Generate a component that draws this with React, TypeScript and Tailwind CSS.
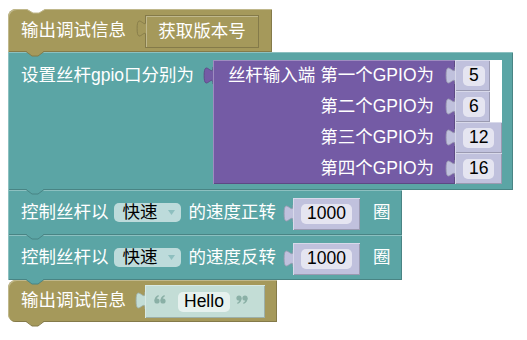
import React from 'react';

const OLIVE = { fill: '#a5995b', light: '#c0b88c', dark: '#847a49' };
const TEAL = { fill: '#5ba5a5', light: '#8cc0c0', dark: '#498484' };
const PURPLE = { fill: '#745ba5', light: '#9e8cc0', dark: '#5d4984' };
const LAV = { fill: '#c0c1dd', light: '#d8d9ea', dark: '#9a9ab1' };
const MINT = { fill: '#c3ddd6', light: '#d8e9e4', dark: '#9cb0aa' };

type Pal = { fill: string; light: string; dark: string };

// puzzle tab on the left side of a value block
function LeftTab({ pal, className }: { pal: Pal; className: string }) {
  return (
    <svg
      className={`absolute right-full z-10 ${className}`}
      width="10"
      height="17"
      viewBox="0 0 9 15"
      preserveAspectRatio="none"
    >
      <path d="M9.5 0 C9 10 1 -8 1 7.5 C1 23 9 5 9.5 15 Z" fill={pal.fill} />
      <path d="M9 0 C9 10 1 -8 1 7.5 C1 23 9 5 9 15" fill="none" stroke={pal.dark} strokeWidth="0.8" />
    </svg>
  );
}

// next-statement tab hanging under a block
function NextTab({ pal }: { pal: Pal }) {
  return (
    <svg className="absolute top-full left-[18px] -mt-px z-10" width="18" height="6" viewBox="0 0 18 6">
      <path d="M0 0 L6 5 L12 5 L18 0 Z" fill={pal.fill} />
      <path d="M0 0.5 L6 5 L12 5 L18 0.5" fill="none" stroke={pal.dark} />
    </svg>
  );
}

function TopNotch() {
  return (
    <svg className="absolute top-0 left-[19px]" width="18" height="5" viewBox="0 0 18 5">
      <path d="M0 0 L6 4 L12 4 L18 0 Z" fill="#ffffff" />
      <path d="M0 0.5 L6 4 L12 4 L18 0.5" fill="none" stroke={OLIVE.light} />
    </svg>
  );
}

// blockly style quote marks ("66" / "99")
function Quote({ close = false }: { close?: boolean }) {
  const mark = (
    <>
      <circle cx="3" cy="6" r="2.6" />
      <path d="M0.4 6 C0.4 3 1.8 1 4.4 0 L4.9 1.2 C3.3 2 2.7 3 2.7 4.6 Z" />
    </>
  );
  return (
    <svg width="12" height="9" viewBox="0 0 12 9" fill="#8ab0a6" className={close ? 'rotate-180' : ''}>
      <g>{mark}</g>
      <g transform="translate(6 0)">{mark}</g>
    </svg>
  );
}

function NumberBlock({ value, width, height, pal = LAV }: { value: string; width: string; height: string; pal?: Pal }) {
  return (
    <div
      className={`relative flex items-center pl-[8px] ${width} ${height} bg-[#c0c1dd] shadow-[inset_1px_1px_0_#d8d9ea,inset_-1px_-1px_0_#9a9ab1]`}
    >
      <LeftTab pal={pal} className="top-[7px]" />
      <span className="h-[20px] px-[6px] flex items-center rounded-[5px] bg-[#e5e5f1] text-black">{value}</span>
    </div>
  );
}

function SpeedBlock({ dir }: { dir: string }) {
  return (
    <div className="relative flex items-center w-[394px] h-[45px] pl-[13px] bg-[#5ba5a5] shadow-[inset_1px_1px_0_#8cc0c0,inset_-1px_-1px_0_#498484]">
      <span>控制丝杆以</span>
      <div className="ml-[5px] flex items-center w-[67px] h-[19px] pl-[9px] rounded-[5px] bg-[#bddbdb] text-black">
        <span>快速</span>
        <svg className="ml-[10px]" width="7" height="5" viewBox="0 0 7 5">
          <path d="M0 0 L7 0 L3.5 5 Z" fill="#8ebfbf" />
        </svg>
      </div>
      <span className="ml-[8px]">的速度{dir}</span>
      <div className="ml-[17px] mt-[3px]">
        <NumberBlock value="1000" width="w-[67px]" height="h-[32px]" />
      </div>
      <span className="ml-[13px]">圈</span>
      <NextTab pal={TEAL} />
    </div>
  );
}

export default function App() {
  const rows = [
    { label: '丝杆输入端 第一个GPIO为', value: '5', w: 'w-[35px]' },
    { label: '第二个GPIO为', value: '6', w: 'w-[35px]' },
    { label: '第三个GPIO为', value: '12', w: 'w-[47px]' },
    { label: '第四个GPIO为', value: '16', w: 'w-[47px]' },
  ];

  return (
    <div className="w-[527px] h-[340px] overflow-hidden bg-white pt-[9px] pl-[8px] text-[17.5px] leading-none text-white font-['Liberation_Sans','Noto_Sans_CJK_SC',sans-serif]">
      {/* 输出调试信息 获取版本号 */}
      <div className="relative z-20 flex items-center w-[264px] h-[43px] pl-[13px] rounded-tl-[8px] bg-[#a5995b] shadow-[inset_1px_1px_0_#c0b88c,inset_-1px_-1px_0_#847a49]">
        <TopNotch />
        <span>输出调试信息</span>
        <div className="relative ml-[19px] mt-[2px] flex items-center justify-center w-[114px] h-[33px] border border-[#847a49] bg-[#a5995b] shadow-[inset_1px_1px_0_#c0b88c]">
          <LeftTab pal={OLIVE} className="top-[4px]" />
          获取版本号
        </div>
        <NextTab pal={OLIVE} />
      </div>

      {/* 设置丝杆gpio口 */}
      <div className="relative z-10 flex w-[505px] h-[138px] pl-[13px] pt-[8px] bg-[#5ba5a5] shadow-[inset_1px_1px_0_#8cc0c0,inset_-1px_-1px_0_#498484]">
        <div className="flex items-center w-[192px] h-[31px]">设置丝杆gpio口分别为</div>
        <div className="flex h-[124px] bg-white">
          <div className="relative flex flex-col items-end w-[242px] pr-[21px] bg-[#745ba5] shadow-[inset_1px_1px_0_#9e8cc0,inset_-1px_-1px_0_#5d4984]">
            <LeftTab pal={PURPLE} className="top-[7px]" />
            {rows.map((r) => (
              <div key={r.label} className="flex items-center h-[31px]">
                {r.label}
              </div>
            ))}
          </div>
          <div className="flex flex-col w-[47px]">
            {rows.map((r) => (
              <NumberBlock key={r.value} value={r.value} width={r.w} height="h-[31px]" />
            ))}
          </div>
        </div>
        <NextTab pal={TEAL} />
      </div>

      <SpeedBlock dir="正转" />
      <SpeedBlock dir="反转" />

      {/* 输出调试信息 "Hello" */}
      <div className="relative flex items-center w-[269px] h-[42px] pl-[13px] rounded-l-[8px] bg-[#a5995b] shadow-[inset_1px_1px_0_#c0b88c,inset_-1px_-1px_0_#847a49]">
        <span>输出调试信息</span>
        <div className="relative ml-[19px] mt-[1px] flex items-center w-[120px] h-[33px] pl-[9px] bg-[#c3ddd6] shadow-[inset_1px_1px_0_#d8e9e4,inset_-1px_-1px_0_#9cb0aa]">
          <LeftTab pal={MINT} className="top-[7px]" />
          <span className="-mt-[4px] flex">
            <Quote />
          </span>
          <span className="ml-[12px] h-[20px] px-[6px] flex items-center rounded-[5px] bg-[#e6f1ee] text-black">Hello</span>
          <span className="ml-[6px] -mt-[4px] flex">
            <Quote close />
          </span>
        </div>
        <NextTab pal={OLIVE} />
      </div>
    </div>
  );
}
